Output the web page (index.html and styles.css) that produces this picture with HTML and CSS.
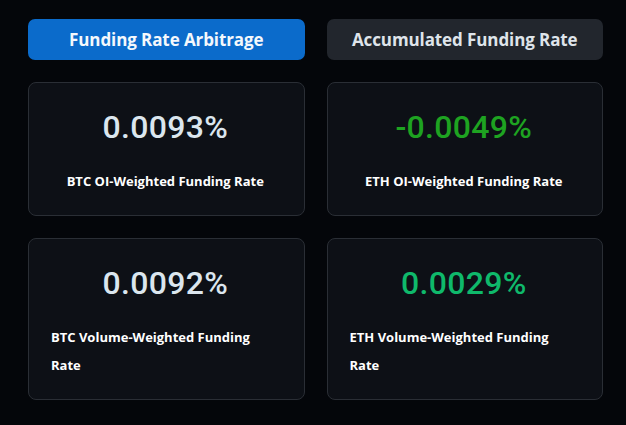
FILE: index.html
```html
<!DOCTYPE html>
<html lang="en">
<head>
    <meta charset="UTF-8">
    <meta name="viewport" content="width=device-width, initial-scale=1.0">
    <title>Funding Rates</title>
    <link rel="stylesheet" href="styles.css">
</head>
<body>
    <div class="dashboard">
        <!-- Tab buttons -->
        <button class="tab-btn active">Funding Rate Arbitrage</button>
        <button class="tab-btn">Accumulated Funding Rate</button>

        <!-- Rate cards -->
        <div class="rate-card">
            <div class="rate-value">0.0093%</div>
            <div class="rate-label">BTC OI-Weighted Funding Rate</div>
        </div>
        <div class="rate-card">
            <div class="rate-value negative">-0.0049%</div>
            <div class="rate-label">ETH OI-Weighted Funding Rate</div>
        </div>
        <div class="rate-card">
            <div class="rate-value">0.0092%</div>
            <div class="rate-label">BTC Volume-Weighted Funding Rate</div>
        </div>
        <div class="rate-card">
            <div class="rate-value positive">0.0029%</div>
            <div class="rate-label">ETH Volume-Weighted Funding Rate</div>
        </div>
    </div>
</body>
</html>
```

FILE: styles.css
```css
body {
    font-family: 'Open Sans', 'Noto Sans', sans-serif;
    background-color: #04060a;
    margin: 0;
    padding: 19px 23px 0 28px;
    color: #fff;
}
.dashboard {
    display: grid;
    grid-template-columns: 1fr 1fr;
    gap: 22px;
}
.tab-btn {
    height: 41px;
    border: none;
    border-radius: 7px;
    background-color: #22262d;
    color: #dfe4ea;
    font-family: 'Open Sans', sans-serif;
    font-size: 17px;
    font-weight: 700;
    letter-spacing: -0.1px;
    cursor: pointer;
}
.tab-btn.active {
    background-color: #0b6bcb;
    color: #f4f8fc;
}
.rate-card {
    display: flex;
    flex-direction: column;
    align-items: center;
    padding: 20px 24px 20px 22px;
    background-color: #0d1016;
    border: 1px solid #2a2e35;
    border-radius: 8px;
}
.rate-value {
    font-family: Roboto, sans-serif;
    font-size: 32px;
    font-weight: 500;
    line-height: 48px;
    letter-spacing: 0.3px;
    color: #dbe6ee;
}
.rate-value.negative {
    color: #1ea321;
}
.rate-value.positive {
    color: #0fb96b;
}
.rate-label {
    margin-top: 16px;
    font-size: 13px;
    font-weight: 700;
    line-height: 28px;
}
```
